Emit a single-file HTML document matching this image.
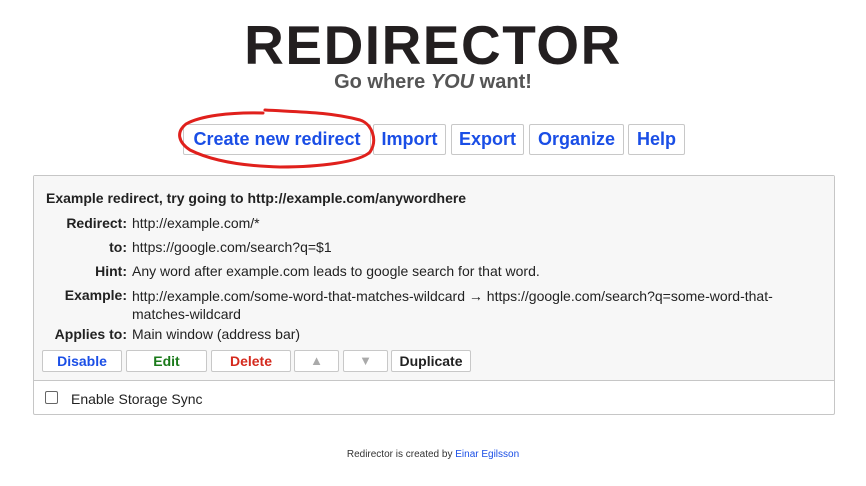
<!DOCTYPE html>
<html><head><style>
*{margin:0;padding:0;box-sizing:border-box}
body{width:866px;height:486px;background:#fff;font-family:"Liberation Sans",Arial,sans-serif;position:relative;overflow:hidden;color:#222}
.a{position:absolute;white-space:nowrap}
h1{position:absolute;left:0;width:866px;text-align:center;top:14px;font-size:55px;letter-spacing:1.5px;line-height:62px;color:#231f20;font-weight:bold}
.sub{left:0;width:866px;text-align:center;top:71px;font-size:20px;font-weight:bold;color:#555}
.btn{position:absolute;top:124px;height:31px;border:1px solid #c8c8c8;border-radius:2px;background:#fff;color:#1a4ee6;font-weight:bold;font-size:18px;text-align:center;line-height:29px}
.box{position:absolute;left:33px;top:175px;width:802px;height:240px;border:1px solid #c6c6c6;border-radius:2px;background:#fff}
.top{position:absolute;left:0;top:0;width:800px;height:205px;background:#f7f7f7;border-bottom:1px solid #c6c6c6}
.lb{position:absolute;right:707px;font-weight:bold;font-size:14px;text-align:right;white-space:nowrap}
.v{position:absolute;left:98px;font-size:14px;white-space:nowrap}
.sb{position:absolute;top:174px;height:22px;border:1px solid #c8c8c8;border-radius:2px;background:#fff;font-weight:bold;font-size:14px;text-align:center;line-height:20px}
.foot{left:0;width:866px;text-align:center;top:449px;font-size:10px;color:#333}
</style></head><body>
<h1>REDIRECTOR</h1>
<div class="a sub">Go where <i>YOU</i> want!</div>
<div class="btn" style="left:183px;width:188px">Create new redirect</div>
<div class="btn" style="left:373px;width:73px">Import</div>
<div class="btn" style="left:451px;width:73px">Export</div>
<div class="btn" style="left:529px;width:95px">Organize</div>
<div class="btn" style="left:628px;width:57px">Help</div>
<svg class="a" style="left:0;top:0" width="866" height="200" viewBox="0 0 866 200"><path d="M263 113 C230 112 200 116 186 124 C176 132 178 142 190 150 C210 160 240 166 280 167 C320 167 360 162 370 152 C378 140 372 124 360 120 C330 112 300 112 265 110" fill="none" stroke="#e0201c" stroke-width="3" stroke-linecap="round"/></svg>
<div class="box">
<div class="top">
<div class="a" style="left:12px;top:14px;font-size:14px;font-weight:bold">Example redirect, try going to http://example.com/anywordhere</div>
<div class="lb" style="top:39px">Redirect:</div><div class="v" style="top:39px">http://example.com/*</div>
<div class="lb" style="top:63px">to:</div><div class="v" style="top:63px">https://google.com/search?q=$1</div>
<div class="lb" style="top:87px">Hint:</div><div class="v" style="top:87px">Any word after example.com leads to google search for that word.</div>
<div class="lb" style="top:111px">Example:</div><div class="v" style="top:111px;line-height:18px">http://example.com/some-word-that-matches-wildcard → https://google.com/search?q=some-word-that-<br>matches-wildcard</div>
<div class="lb" style="top:150px">Applies to:</div><div class="v" style="top:150px">Main window (address bar)</div>
<div class="sb" style="left:8px;width:80px;color:#1a4ee6">Disable</div>
<div class="sb" style="left:92px;width:81px;color:#1a7a1a">Edit</div>
<div class="sb" style="left:177px;width:80px;color:#d42a1e">Delete</div>
<div class="sb" style="left:260px;width:45px;color:#aaa;font-size:13px">▲</div>
<div class="sb" style="left:309px;width:45px;color:#aaa;font-size:13px">▼</div>
<div class="sb" style="left:357px;width:80px;color:#222">Duplicate</div>
</div>
<div class="a" style="left:11px;top:215px;width:13px;height:13px;border:1px solid #666;border-radius:2px;background:#fff"></div>
<div class="a" style="left:37px;top:215px;font-size:14px">Enable Storage Sync</div>
</div>
<div class="a foot">Redirector is created by <span style="color:#1a4ee6">Einar Egilsson</span></div>
</body></html>
